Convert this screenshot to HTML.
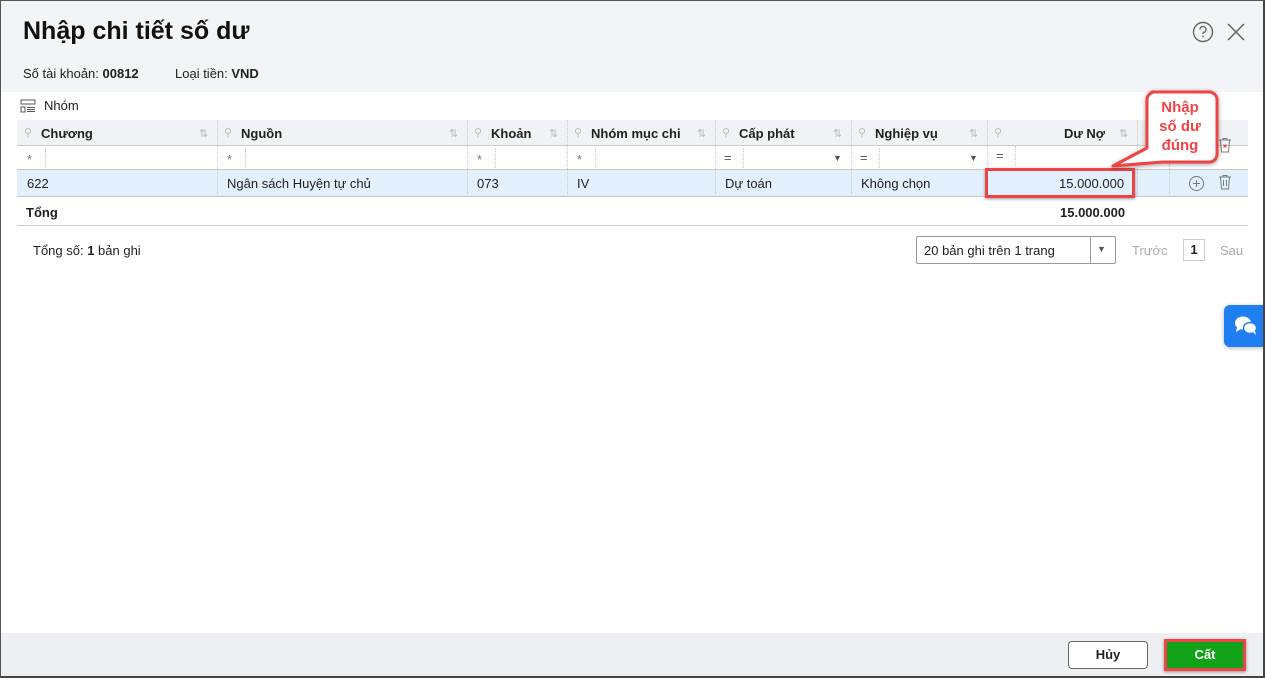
<!DOCTYPE html>
<html><head><meta charset="utf-8"><style>
*{box-sizing:border-box;margin:0;padding:0}
body{width:1265px;height:678px;overflow:hidden;background:#fff;font-family:"Liberation Sans","DejaVu Sans",sans-serif;font-size:13px;color:#212121;position:relative}
.frame{position:absolute;left:0;top:0;width:1265px;height:678px;border:1px solid #555;border-right:2px solid #444;border-bottom:2px solid #444}
.top{position:absolute;left:1px;top:1px;width:1262px;height:91px;background:#f3f4f8}
.a{position:absolute;white-space:nowrap}
.hdr{position:absolute;top:120px;height:26px;background:#f1f2f5;border-bottom:1px solid #c8c8c8}
.c{position:absolute;top:0;height:100%;border-left:1px solid #d8d8d8}
.row{position:absolute;left:17px;width:1231px}
.pin{color:#bbb;font-size:11px}
.srt{color:#bbb;font-size:11px}
b{font-weight:bold}
</style></head><body>
<div class="top"></div>
<div class="a" style="left:23px;top:17px;font-size:25px;font-weight:bold;color:#111">Nhập chi tiết số dư</div>
<div class="a" style="left:23px;top:66px">Số tài khoản: <b>00812</b></div>
<div class="a" style="left:175px;top:66px">Loại tiền: <b>VND</b></div>
<svg class="a" style="left:1192px;top:21px" width="22" height="22" viewBox="0 0 22 22"><circle cx="11" cy="11" r="9.5" fill="none" stroke="#666" stroke-width="1.4"/><path d="M8 8.5a3 3 0 1 1 4 2.8c-.8.4-1 .9-1 1.7" fill="none" stroke="#666" stroke-width="1.4"/><circle cx="11" cy="15.5" r=".9" fill="#666"/></svg>
<svg class="a" style="left:1226px;top:22px" width="20" height="20" viewBox="0 0 20 20"><path d="M2 2L18 18M18 2L2 18" stroke="#666" stroke-width="1.5"/></svg>

<svg class="a" style="left:20px;top:99px" width="16" height="14" viewBox="0 0 16 14"><rect x="1" y="1" width="14" height="4" fill="none" stroke="#555"/><rect x="1" y="8" width="4" height="5" fill="none" stroke="#555"/><path d="M7 8.5h8M7 10.5h8M7 12.5h8" stroke="#555"/></svg>
<div class="a" style="left:44px;top:98px">Nhóm</div>

<div class="hdr" style="left:17px;width:1231px"></div>
<div class="row" style="top:146px;height:24px;border-bottom:1px solid #c8c8c8"></div>
<div class="row" style="top:170px;height:27px;background:#e2f0fd;border-bottom:1px solid #c8c8c8"></div>
<div class="row" style="top:197px;height:29px;border-bottom:1px solid #ccc"></div>

<div class="a" style="left:17px;top:120px;height:77px;width:1231px">
<div class="c" style="left:200px;border-left:1px dotted #ccc"></div>
<div class="c" style="left:450px;border-left:1px dotted #ccc"></div>
<div class="c" style="left:550px;border-left:1px dotted #ccc"></div>
<div class="c" style="left:698px;border-left:1px dotted #ccc"></div>
<div class="c" style="left:834px;border-left:1px dotted #ccc"></div>
<div class="c" style="left:970px;border-left:1px dotted #ccc"></div>
<div class="c" style="left:1120px;border-left:1px dotted #ccc"></div>
<div class="c" style="left:1152px;border-left:1px dotted #ccc"></div>
</div>

<div class="a pin" style="left:24px;top:126px">⚲</div><div class="a" style="left:41px;top:126px;font-weight:bold">Chương</div><div class="a srt" style="left:199px;top:127px">⇅</div>
<div class="a pin" style="left:224px;top:126px">⚲</div><div class="a" style="left:241px;top:126px;font-weight:bold">Nguồn</div><div class="a srt" style="left:449px;top:127px">⇅</div>
<div class="a pin" style="left:474px;top:126px">⚲</div><div class="a" style="left:491px;top:126px;font-weight:bold">Khoản</div><div class="a srt" style="left:549px;top:127px">⇅</div>
<div class="a pin" style="left:574px;top:126px">⚲</div><div class="a" style="left:591px;top:126px;font-weight:bold">Nhóm mục chi</div><div class="a srt" style="left:697px;top:127px">⇅</div>
<div class="a pin" style="left:722px;top:126px">⚲</div><div class="a" style="left:739px;top:126px;font-weight:bold">Cấp phát</div><div class="a srt" style="left:833px;top:127px">⇅</div>
<div class="a pin" style="left:858px;top:126px">⚲</div><div class="a" style="left:875px;top:126px;font-weight:bold">Nghiệp vụ</div><div class="a srt" style="left:969px;top:127px">⇅</div>
<div class="a pin" style="left:994px;top:126px">⚲</div><div class="a" style="left:1064px;top:126px;font-weight:bold">Dư Nợ</div><div class="a srt" style="left:1119px;top:127px">⇅</div>

<div class="a" style="left:27px;top:152px;color:#777">*</div><div class="a" style="left:45px;top:148px;height:20px;border-left:1px dotted #ccc"></div>
<div class="a" style="left:227px;top:152px;color:#777">*</div><div class="a" style="left:245px;top:148px;height:20px;border-left:1px dotted #ccc"></div>
<div class="a" style="left:477px;top:152px;color:#777">*</div><div class="a" style="left:495px;top:148px;height:20px;border-left:1px dotted #ccc"></div>
<div class="a" style="left:577px;top:152px;color:#777">*</div><div class="a" style="left:595px;top:148px;height:20px;border-left:1px dotted #ccc"></div>
<div class="a" style="left:724px;top:150px;color:#555">=</div><div class="a" style="left:743px;top:148px;height:20px;border-left:1px dotted #ccc"></div><div class="a" style="left:833px;top:153px;font-size:9px;color:#555">▼</div>
<div class="a" style="left:860px;top:150px;color:#555">=</div><div class="a" style="left:879px;top:148px;height:20px;border-left:1px dotted #ccc"></div><div class="a" style="left:969px;top:153px;font-size:9px;color:#555">▼</div>
<div class="a" style="left:996px;top:148px;color:#555">=</div><div class="a" style="left:1015px;top:146px;height:20px;border-left:1px dotted #ccc"></div>
<svg class="a" style="left:1217px;top:137px" width="16" height="16" viewBox="0 0 16 16"><path d="M2 3h12M6 3V1.5h4V3M3.5 3l1 12h7l1-12" fill="none" stroke="#777"/><path d="M6.5 7.5l3 3M9.5 7.5l-3 3" stroke="#e53935"/></svg>

<div class="a" style="left:27px;top:176px">622</div>
<div class="a" style="left:227px;top:176px">Ngân sách Huyện tự chủ</div>
<div class="a" style="left:477px;top:176px">073</div>
<div class="a" style="left:577px;top:176px">IV</div>
<div class="a" style="left:725px;top:176px">Dự toán</div>
<div class="a" style="left:861px;top:176px">Không chọn</div>
<div class="a" style="left:985px;top:168px;width:150px;height:30px;border:3px solid #ef4444;box-shadow:0 1px 3px rgba(0,0,0,.4)"></div>
<div class="a" style="left:1059px;top:176px">15.000.000</div>
<svg class="a" style="left:1188px;top:175px" width="17" height="17" viewBox="0 0 17 17"><circle cx="8.5" cy="8.5" r="7" fill="none" stroke="#777"/><path d="M8.5 5v7M5 8.5h7" stroke="#777"/></svg>
<svg class="a" style="left:1217px;top:174px" width="16" height="16" viewBox="0 0 16 16"><path d="M2 3h12M6 3V1.5h4V3M3.5 3l1 12h7l1-12M6.5 6v6M9.5 6v6" fill="none" stroke="#777"/></svg>

<div class="a" style="left:26px;top:205px;font-weight:bold">Tổng</div>
<div class="a" style="left:1060px;top:205px;font-weight:bold">15.000.000</div>

<div class="a" style="left:33px;top:243px">Tổng số: <b>1</b> bản ghi</div>
<div class="a" style="left:916px;top:236px;width:200px;height:28px;border:1px solid #999;border-radius:2px"><div class="a" style="left:7px;top:6px">20 bản ghi trên 1 trang</div><div class="a" style="left:173px;top:0;height:26px;border-left:1px solid #999"></div><div class="a" style="left:180px;top:7px;font-size:9px;color:#555">▼</div></div>
<div class="a" style="left:1132px;top:243px;color:#aaa">Trước</div>
<div class="a" style="left:1183px;top:239px;width:22px;height:22px;border:1px solid #ccc;text-align:center;line-height:20px;font-weight:bold">1</div>
<div class="a" style="left:1220px;top:243px;color:#aaa">Sau</div>

<div class="a" style="left:1224px;top:305px;width:41px;height:42px;background:#1f7ff0;border-radius:6px 0 0 6px;box-shadow:0 1px 4px rgba(0,0,0,.3)">
<svg class="a" style="left:10px;top:10px" width="24" height="22" viewBox="0 0 24 22"><ellipse cx="9" cy="8" rx="8" ry="6.5" fill="#fff"/><path d="M3 12l-1 5 5-3z" fill="#fff"/><ellipse cx="16" cy="13" rx="6.5" ry="5.5" fill="#fff" stroke="#1f7ff0" stroke-width="1.5"/><path d="M19 17l3 3-1-4z" fill="#fff"/></svg></div>

<svg class="a" style="left:1105px;top:88px" width="120" height="85" viewBox="0 0 120 85"><path d="M47 4h57a8 8 0 0 1 8 8v54a8 8 0 0 1-8 8H57L8 78 42 60V12a8 8 0 0 1 8-8z" fill="#fff" stroke="#ef4444" stroke-width="3" stroke-linejoin="round" filter="drop-shadow(0 1px 2px rgba(0,0,0,.4))"/></svg>
<div class="a" style="left:1147px;top:98px;width:66px;text-align:center;color:#ef4444;font-weight:bold;font-size:15px;line-height:19px;white-space:normal">Nhập<br>số dư<br>đúng</div>

<div class="a" style="left:1px;top:633px;width:1262px;height:43px;background:#eeeff2"></div>
<div class="a" style="left:1068px;top:641px;width:80px;height:28px;border:1px solid #666;border-radius:4px;background:#fff;text-align:center;line-height:26px;font-weight:bold">Hủy</div>
<div class="a" style="left:1164px;top:639px;width:82px;height:32px;border:3px solid #ef4444;background:#12a21a;color:#fff;text-align:center;line-height:26px;font-weight:bold;box-shadow:0 1px 3px rgba(0,0,0,.4)">Cất</div>
<div class="frame"></div>
</body></html>
